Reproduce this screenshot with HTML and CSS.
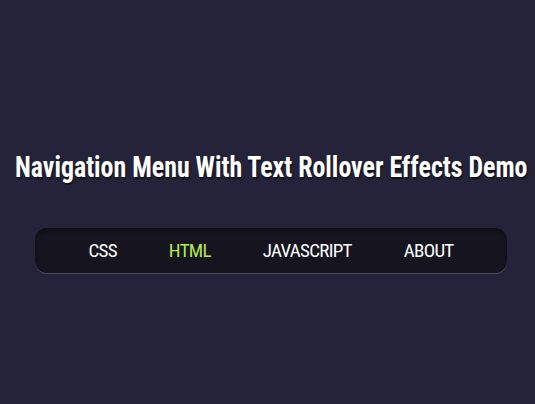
FILE: index.html
```html
<!doctype html>
<html lang="en">
<head>
    <meta charset="UTF-8">
    <title>Navigation Menu With Text Rollover Effects Demo</title>
    <link rel="stylesheet" href="styles.css">
</head>
<body>
<div class="wrap">
    <h1 class="title">Navigation Menu With Text Rollover Effects Demo</h1>
    <nav class="menu">
        <a class="menu-item" href="#">CSS</a>
        <a class="menu-item active" href="#">HTML</a>
        <a class="menu-item" href="#">JAVASCRIPT</a>
        <a class="menu-item" href="#">ABOUT</a>
    </nav>
</div>
</body>
</html>
```

FILE: styles.css
```css
html, body {
    margin: 0;
    padding: 0;
    height: 100%;
}
body {
    background: #25233a;
    font-family: "Roboto", "Liberation Sans", sans-serif;
    font-stretch: 75%;
    color: #ffffff;
}
.wrap {
    display: flex;
    flex-direction: column;
    align-items: center;
    padding: 150px 0 0 7px;
}
.title {
    margin: 0;
    font-size: 30px;
    font-weight: 700;
    line-height: 34px;
    white-space: nowrap;
    transform: scaleX(0.862);
    text-shadow: 1px 2px 2px rgba(0, 0, 0, 0.6);
}
.menu {
    display: flex;
    margin-top: 44px;
    padding: 0 27px;
    height: 45px;
    align-items: center;
    background: #16141f;
    border-radius: 12px;
    box-shadow: inset 0 2px 4px rgba(0, 0, 0, 0.4), 0 1px 0 rgba(255, 255, 255, 0.18);
}
.menu-item {
    padding: 0 26px;
    font-size: 19px;
    letter-spacing: -0.7px;
    color: #ffffff;
    text-decoration: none;
}
.active {
    color: #b5e853;
}
```
